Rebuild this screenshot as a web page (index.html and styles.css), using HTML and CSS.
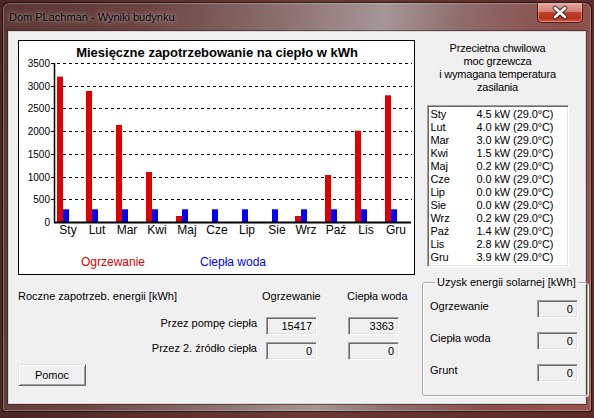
FILE: index.html
```html
<!DOCTYPE html>
<html lang="pl">
<head>
  <meta charset="UTF-8">
  <link rel="stylesheet" href="styles.css">
</head>
<body>
<div class="window">
  <div class="titlebar">
    <span class="title">Dom PLachman - Wyniki budynku</span>
    <div class="close-btn">
      <svg width="44" height="19" viewBox="0 0 44 19">
        <path d="M17 5 L27 14 M27 5 L17 14" stroke="#3a2a2a" stroke-width="4.5" stroke-linecap="round"/>
        <path d="M17 5 L27 14 M27 5 L17 14" stroke="#fff" stroke-width="2.6" stroke-linecap="round"/>
      </svg>
    </div>
  </div>
  <div class="client">
    <div class="chart">
      <svg width="395" height="233" viewBox="19 41 395 233">
        <text class="chart-title" x="217" y="57" text-anchor="middle">Miesięczne zapotrzebowanie na ciepło w kWh</text>
        <!-- siatka -->
        <g stroke="#000" stroke-width="1" stroke-dasharray="3 3">
          <line x1="51" y1="63.5" x2="412" y2="63.5"/>
          <line x1="51" y1="86.5" x2="412" y2="86.5"/>
          <line x1="51" y1="108.5" x2="412" y2="108.5"/>
          <line x1="51" y1="131.5" x2="412" y2="131.5"/>
          <line x1="51" y1="154.5" x2="412" y2="154.5"/>
          <line x1="51" y1="177.5" x2="412" y2="177.5"/>
          <line x1="51" y1="199.5" x2="412" y2="199.5"/>
        </g>
        <g class="axis-label" text-anchor="end">
          <text x="50" y="67">3500</text>
          <text x="50" y="90">3000</text>
          <text x="50" y="112">2500</text>
          <text x="50" y="135">2000</text>
          <text x="50" y="158">1500</text>
          <text x="50" y="181">1000</text>
          <text x="50" y="203">500</text>
          <text x="50" y="226">0</text>
        </g>
        <!-- ogrzewanie -->
        <g fill="#e00000">
          <rect x="57" y="76.6" width="6" height="145.4"/>
          <rect x="86" y="91" width="6" height="131"/>
          <rect x="116" y="125" width="6" height="97"/>
          <rect x="146" y="172" width="6" height="50"/>
          <rect x="176" y="216" width="6" height="6"/>
          <rect x="295" y="216" width="6" height="6"/>
          <rect x="325" y="175" width="6" height="47"/>
          <rect x="355" y="130.7" width="6" height="91.3"/>
          <rect x="385" y="95.3" width="6" height="126.7"/>
        </g>
        <!-- ciepła woda -->
        <g fill="#0000ff">
          <rect x="63" y="209.3" width="6" height="12.7"/>
          <rect x="92" y="209.3" width="6" height="12.7"/>
          <rect x="122" y="209.3" width="6" height="12.7"/>
          <rect x="152" y="209.3" width="6" height="12.7"/>
          <rect x="182" y="209.3" width="6" height="12.7"/>
          <rect x="212" y="209.3" width="6" height="12.7"/>
          <rect x="242" y="209.3" width="6" height="12.7"/>
          <rect x="272" y="209.3" width="6" height="12.7"/>
          <rect x="301" y="209.3" width="6" height="12.7"/>
          <rect x="331" y="209.3" width="6" height="12.7"/>
          <rect x="361" y="209.3" width="6" height="12.7"/>
          <rect x="391" y="209.3" width="6" height="12.7"/>
        </g>
        <line x1="54.5" y1="63" x2="54.5" y2="223" stroke="#000" stroke-width="1.5"/>
        <line x1="54" y1="222.5" x2="411" y2="222.5" stroke="#000" stroke-width="2"/>
        <g class="month-label" text-anchor="middle">
          <text x="68" y="234">Sty</text>
          <text x="97" y="234">Lut</text>
          <text x="127" y="234">Mar</text>
          <text x="157" y="234">Kwi</text>
          <text x="187" y="234">Maj</text>
          <text x="217" y="234">Cze</text>
          <text x="247" y="234">Lip</text>
          <text x="277" y="234">Sie</text>
          <text x="306" y="234">Wrz</text>
          <text x="336" y="234">Paź</text>
          <text x="366" y="234">Lis</text>
          <text x="396" y="234">Gru</text>
        </g>
        <text class="legend-label" x="113" y="266" text-anchor="middle" fill="#e00000">Ogrzewanie</text>
        <text class="legend-label" x="233" y="266" text-anchor="middle" fill="#0000ff">Ciepła woda</text>
      </svg>
    </div>

    <div class="side">
      <div class="side-heading">Przecietna chwilowa<br>moc grzewcza<br>i wymagana temperatura<br>zasilania</div>
      <div class="listbox">
        <div class="list-row"><span>Sty</span><span>4.5 kW (29.0°C)</span></div>
        <div class="list-row"><span>Lut</span><span>4.0 kW (29.0°C)</span></div>
        <div class="list-row"><span>Mar</span><span>3.0 kW (29.0°C)</span></div>
        <div class="list-row"><span>Kwi</span><span>1.5 kW (29.0°C)</span></div>
        <div class="list-row"><span>Maj</span><span>0.2 kW (29.0°C)</span></div>
        <div class="list-row"><span>Cze</span><span>0.0 kW (29.0°C)</span></div>
        <div class="list-row"><span>Lip</span><span>0.0 kW (29.0°C)</span></div>
        <div class="list-row"><span>Sie</span><span>0.0 kW (29.0°C)</span></div>
        <div class="list-row"><span>Wrz</span><span>0.2 kW (29.0°C)</span></div>
        <div class="list-row"><span>Paź</span><span>1.4 kW (29.0°C)</span></div>
        <div class="list-row"><span>Lis</span><span>2.8 kW (29.0°C)</span></div>
        <div class="list-row"><span>Gru</span><span>3.9 kW (29.0°C)</span></div>
      </div>
    </div>

    <div class="annual">
      <div class="annual-grid">
        <div class="annual-title">Roczne zapotrzeb. energii [kWh]</div>
        <div class="col-head head-heating">Ogrzewanie</div>
        <div class="col-head head-water">Ciepła woda</div>
        <div class="row-label">Przez pompę ciepła</div>
        <div class="field">15417</div>
        <div class="field">3363</div>
        <div class="row-label">Przez 2. źródło ciepła</div>
        <div class="field">0</div>
        <div class="field">0</div>
      </div>
      <button class="win-button">Pomoc</button>
    </div>

    <fieldset class="solar">
      <legend>Uzysk energii solarnej [kWh]</legend>
      <div class="solar-row">
        <span>Ogrzewanie</span>
        <div class="field field-small">0</div>
      </div>
      <div class="solar-row">
        <span>Ciepła woda</span>
        <div class="field field-small">0</div>
      </div>
      <div class="solar-row">
        <span>Grunt</span>
        <div class="field field-small">0</div>
      </div>
    </fieldset>
  </div>
</div>
</body>
</html>
```

FILE: styles.css
```css
body {
  margin: 0;
  width: 594px;
  height: 418px;
  padding: 2px 0 0 2px;
  box-sizing: border-box;
  overflow: hidden;
  background: linear-gradient(90deg, #4a2624, #6a3a34 50%, #5a2a26);
  font-family: "Liberation Sans", Arial, sans-serif;
  font-size: 11px;
  color: #000;
}

.window {
  width: 590px;
  height: 410px;
  box-sizing: border-box;
  border: 1px solid rgba(25, 12, 12, 0.85);
  border-radius: 7px 7px 3px 3px;
  background: linear-gradient(100deg, #5a3634 0%, #6c4442 22%, #8a6e6e 42%, #a69696 58%, #8e6c6c 70%, #8a4e4a 85%, #9a564e 100%);
  box-shadow: inset 0 0 0 1px rgba(255, 255, 255, 0.25);
  display: flex;
  flex-direction: column;
}

.titlebar {
  height: 28px;
  display: flex;
  align-items: center;
  padding-left: 6px;
}

.title {
  font-size: 11px;
  color: #000;
  text-shadow: 0 0 6px rgba(255, 255, 255, 0.6), 0 0 2px rgba(255, 255, 255, 0.4);
}

.close-btn {
  margin-left: auto;
  margin-right: 8px;
  align-self: flex-start;
  width: 44px;
  height: 19px;
  border: 1px solid rgba(60, 20, 20, 0.9);
  border-top: none;
  border-radius: 0 0 5px 5px;
  background: linear-gradient(180deg, #e4aaa0 0%, #d47e70 45%, #c0422e 50%, #b8301c 80%, #d05a40 100%);
  box-shadow: inset 0 0 0 1px rgba(255, 200, 190, 0.45);
}

.close-btn svg {
  display: block;
}

.client {
  margin: 0 5px;
  width: 578px;
  height: 373px;
  box-sizing: border-box;
  background: #f0f0f0;
  border: 1px solid #d8d8d8;
  box-shadow: 0 0 0 1px rgba(50, 30, 30, 0.55);
  padding: 8px 0 0 9px;
  display: grid;
  grid-template-columns: 397px 165px;
  grid-template-rows: 235px auto;
}

.chart {
  border: 1px solid #000;
  background: #fff;
}

.chart svg {
  display: block;
}

.chart-title {
  font-family: "Liberation Sans", Arial, sans-serif;
  font-weight: bold;
  font-size: 13px;
}

.axis-label {
  font-family: "Liberation Sans", Arial, sans-serif;
  font-size: 10px;
}

.month-label {
  font-family: "Liberation Sans", Arial, sans-serif;
  font-size: 12px;
}

.legend-label {
  font-family: "Liberation Sans", Arial, sans-serif;
  font-size: 12px;
}

.side {
  display: flex;
  flex-direction: column;
  align-items: center;
  padding-top: 2px;
}

.side-heading {
  text-align: center;
  line-height: 13px;
  letter-spacing: -0.2px;
}

.listbox {
  margin-top: 11px;
  width: 142px;
  height: 162px;
  box-sizing: border-box;
  background: #fff;
  border: 1px solid;
  border-color: #a0a0a0 #fff #fff #a0a0a0;
  box-shadow: inset 1px 1px 0 #696969, inset -1px -1px 0 #e3e3e3;
  padding: 2px 0 0 3px;
}

.list-row {
  display: grid;
  grid-template-columns: 46px 1fr;
  line-height: 13px;
  letter-spacing: -0.1px;
}

.annual {
  padding-top: 15px;
}

/* kolumny: opis | pole ogrzewania + odstęp | pole ciepłej wody */
.annual-grid {
  display: grid;
  grid-template-columns: 248px 82px 51px;
  grid-template-rows: 20px 18px 18px;
  row-gap: 7px;
  line-height: 13px;
}

.annual-title {
  align-self: start;
}

.col-head {
  align-self: start;
  white-space: nowrap;
}

.head-heating {
  margin-left: -4px;
}

.head-water {
  margin-left: -1px;
}

.row-label {
  text-align: right;
  padding-right: 9px;
  align-self: start;
}

.field {
  width: 51px;
  height: 18px;
  box-sizing: border-box;
  border: 1px solid;
  border-color: #a0a0a0 #fff #fff #a0a0a0;
  box-shadow: inset 1px 1px 0 #696969, inset -1px -1px 0 #e3e3e3;
  background: #f0f0f0;
  text-align: right;
  padding-right: 4px;
  line-height: 17px;
}

.field-small {
  width: 41px;
}

.win-button {
  display: block;
  margin-top: 4px;
  width: 68px;
  height: 22px;
  padding: 0;
  font-family: "Liberation Sans", Arial, sans-serif;
  font-size: 11px;
  color: #000;
  background: #f0f0f0;
  border: 1px solid;
  border-color: #e3e3e3 #696969 #696969 #e3e3e3;
  box-shadow: inset 1px 1px 0 #fff, inset -1px -1px 0 #a0a0a0;
}

.solar {
  margin: 1px 8px 0 7px;
  padding: 0 9px 11px 7px;
  height: 120px;
  box-sizing: border-box;
  border: 1px solid #a9a9a9;
  border-radius: 3px;
  box-shadow: inset 1px 1px 0 #fff, 1px 1px 0 #fff;
}

.solar legend {
  margin-left: 5px;
  padding: 0 2px;
  line-height: 13px;
  white-space: nowrap;
}

.solar-row {
  display: flex;
  justify-content: space-between;
  align-items: flex-start;
  line-height: 13px;
  margin-top: 14px;
}

.solar-row:first-of-type {
  margin-top: 11px;
}
```
